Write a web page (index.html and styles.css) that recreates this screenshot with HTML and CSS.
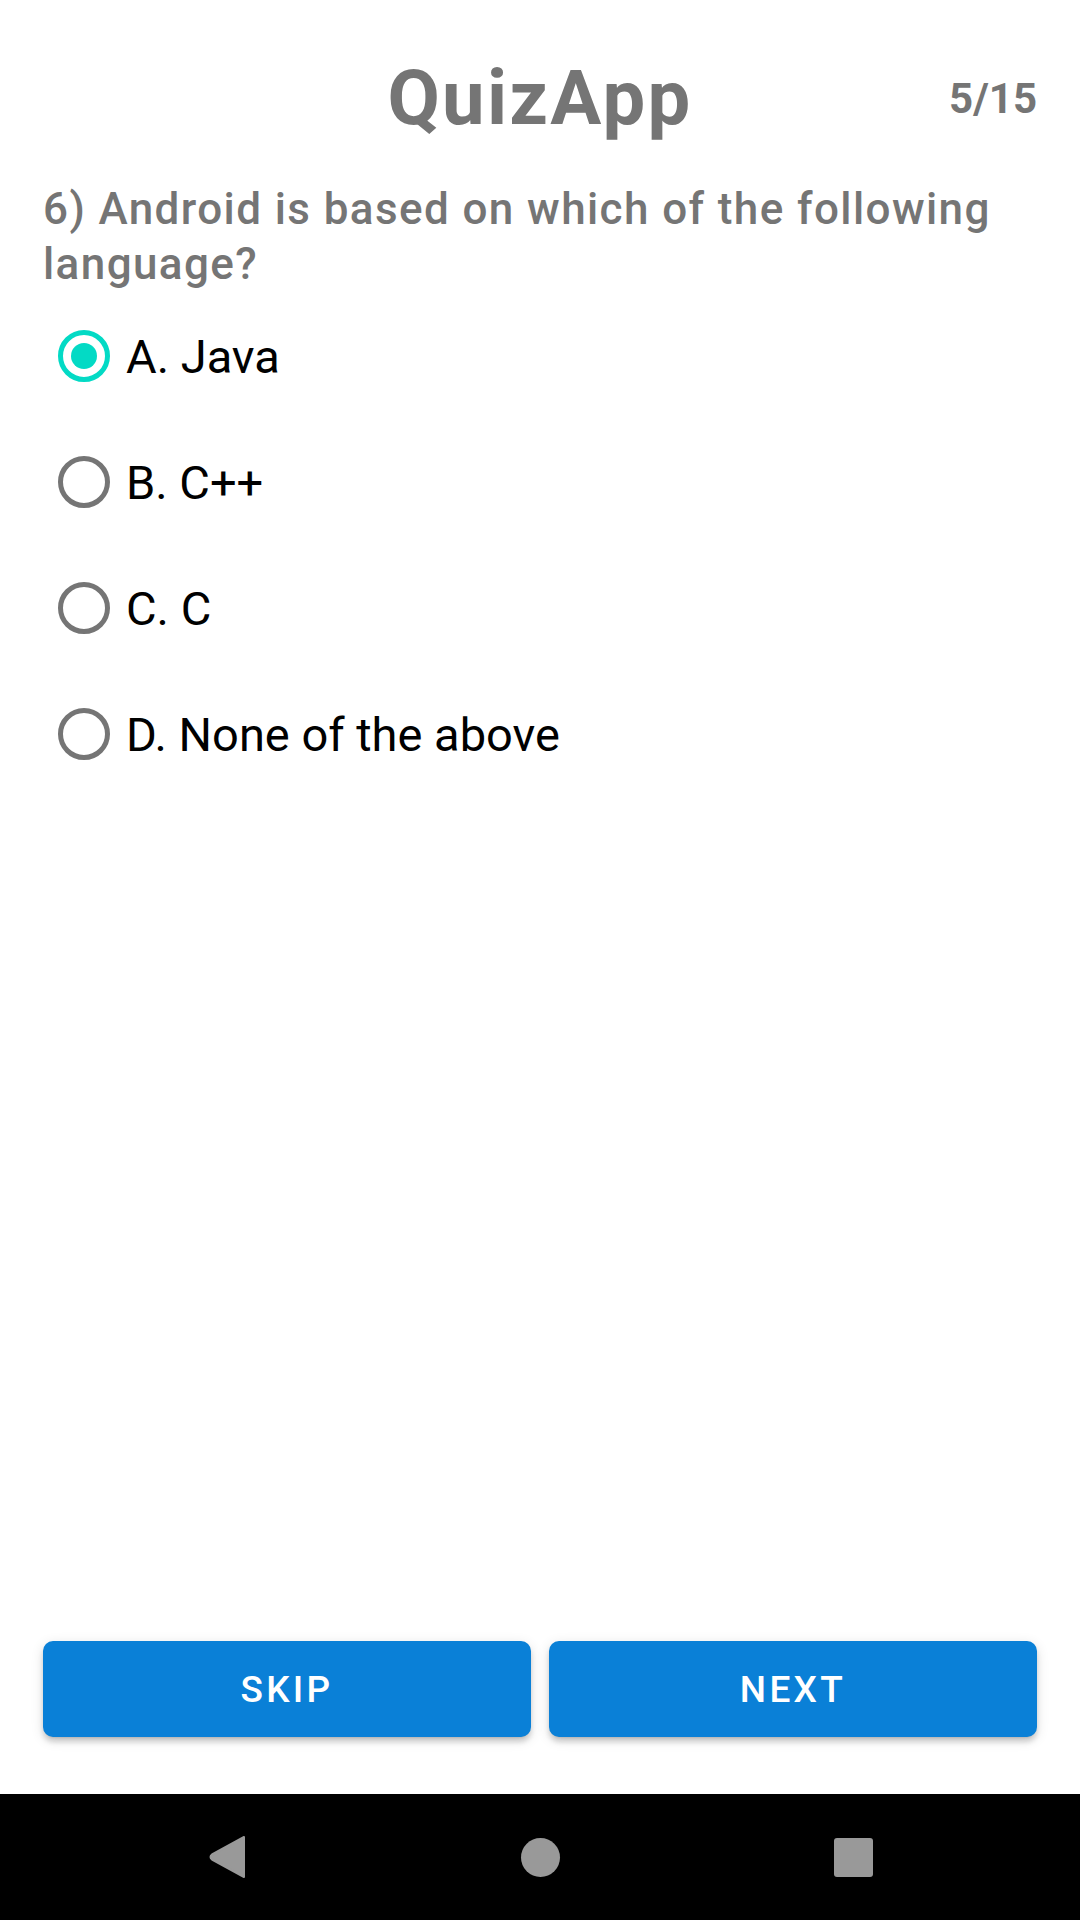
FILE: index.html
```html
<!DOCTYPE html>
<html lang="en">

<head>
    <title>QuizApp</title>

    <link rel="stylesheet" href="styles.css">
</head>

<body>
    <div class="app">
        <div class="header">
            <div class="title">QuizApp</div>
            <div class="counter">5/15</div>
        </div>

        <div class="question">6) Android is based on which of the following language?</div>

        <div class="options">
            <div class="option checked">
                <span class="radio"></span>
                <span class="label">A. Java</span>
            </div>
            <div class="option">
                <span class="radio"></span>
                <span class="label">B. C++</span>
            </div>
            <div class="option">
                <span class="radio"></span>
                <span class="label">C. C</span>
            </div>
            <div class="option">
                <span class="radio"></span>
                <span class="label">D. None of the above</span>
            </div>
        </div>

        <div class="spacer"></div>

        <div class="button-row">
            <button class="btn">SKIP</button>
            <button class="btn">NEXT</button>
        </div>
    </div>

    <div class="navbar">
        <div class="nav-icon">
            <svg width="40" height="44" viewBox="0 0 40 44">
                <path d="M37 2 L37 42 L5 24.5 Q2 22 5 19.5 Z" fill="#999999" stroke="#999999" stroke-width="2" stroke-linejoin="round"/>
            </svg>
        </div>
        <div class="nav-icon">
            <span class="home"></span>
        </div>
        <div class="nav-icon">
            <span class="recents"></span>
        </div>
    </div>
</body>
</html>
```

FILE: styles.css
```css
body,
html {
    margin: 0;
    padding: 0;
    width: 1080px;
    height: 1920px;
    background-color: white;
    font-family: Roboto, 'Noto Sans', sans-serif;
}

body {
    display: flex;
    flex-direction: column;
}

.app {
    flex: 1;
    display: flex;
    flex-direction: column;
    padding: 0 43px;
}

.header {
    display: grid;
    grid-template-columns: 1fr auto 1fr;
    align-items: center;
    margin-top: 53px;
}

.title {
    grid-column: 2;
    font-size: 76px;
    line-height: 90px;
    font-weight: 700;
    letter-spacing: 2.3px;
    color: #757575;
}

.counter {
    grid-column: 3;
    justify-self: end;
    font-size: 42px;
    font-weight: 700;
    color: #757575;
}

.question {
    margin-top: 39px;
    font-size: 44px;
    line-height: 55px;
    font-weight: 500;
    letter-spacing: 1.4px;
    color: #757575;
}

.options {
    display: flex;
    flex-direction: column;
    margin-top: 1px;
}

.option {
    display: flex;
    align-items: center;
    height: 126px;
    padding-left: 15px;
}

.radio {
    width: 52px;
    height: 52px;
    box-sizing: border-box;
    border: 5px solid #757575;
    border-radius: 50%;
    display: flex;
    align-items: center;
    justify-content: center;
    margin-right: 16px;
}

.option.checked .radio {
    border-color: #03dac5;
}

.option.checked .radio::after {
    content: "";
    width: 26px;
    height: 26px;
    border-radius: 50%;
    background-color: #03dac5;
}

.label {
    font-size: 47px;
    color: black;
}

.spacer {
    flex: 1;
}

.button-row {
    display: flex;
    gap: 18px;
    margin-bottom: 57px;
}

.btn {
    flex: 1;
    height: 96px;
    border: none;
    border-radius: 10px;
    background-color: #0a80d7;
    color: white;
    font-family: Roboto, sans-serif;
    font-size: 37px;
    font-weight: 500;
    letter-spacing: 3.3px;
    box-shadow: 0 5px 3px -5px rgba(0, 0, 0, 0.2), 0 5px 5px 0 rgba(0, 0, 0, 0.14), 0 3px 13px 0 rgba(0, 0, 0, 0.12);
}

.navbar {
    height: 126px;
    background-color: black;
    display: flex;
    justify-content: center;
    align-items: center;
    gap: 253px;
}

.nav-icon {
    width: 60px;
    height: 60px;
    display: flex;
    align-items: center;
    justify-content: center;
}

.home {
    width: 39px;
    height: 39px;
    border-radius: 50%;
    background-color: #999999;
}

.recents {
    width: 39px;
    height: 39px;
    border-radius: 3px;
    background-color: #999999;
}
```
